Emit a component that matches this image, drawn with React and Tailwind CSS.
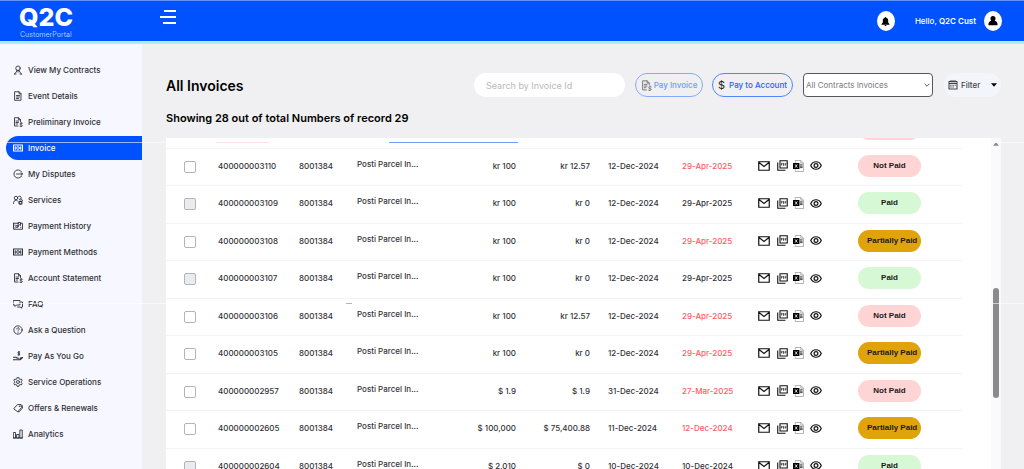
import React, { useState } from "react";

const Icon = ({ children, className = "size-[10px]", box = 20 }) => (
  <svg
    viewBox={`0 0 ${box} ${box}`}
    className={`${className} shrink-0`}
    fill="none"
    stroke="currentColor"
    strokeWidth="1.8"
    strokeLinecap="round"
    strokeLinejoin="round"
    aria-hidden="true"
  >
    {children}
  </svg>
);

const ContractIcon = () => (
  <Icon>
    <circle cx="10" cy="6.5" r="4.5" />
    <path d="M8 10.5 6.5 14 3 18M12 10.5l1.500 3.500L17 18M10 11v3M3 18h3M14 18h3" />
  </Icon>
);

const DocIcon = () => (
  <Icon>
    <path d="M4 1.500h8l4 4v13H4zM12 1.500v4h4M7 9h6M7 12h6M7 15h4" />
  </Icon>
);

const DocDollarIcon = ({ className }) => (
  <Icon className={className}>
    <path d="M10 18H3V1.500h8l4 4V9M11 1.500v4h4M6 8h5M6 11h5M6 14h3" />
    <path d="M18.500 12.500h-3a1.500 1.500 0 0 0 0 3h1.500a1.500 1.500 0 0 1 0 3h-3M16.300 11v1.500M16.300 18.500V20" />
  </Icon>
);

const MoneyIcon = () => (
  <Icon>
    <path d="M1 4h18v12H1z" strokeWidth="2.200" />
    <circle cx="10" cy="10" r="2.800" />
    <path d="M4.500 7.500v5M15.500 7.500v5" strokeWidth="2.200" />
  </Icon>
);

const DisputeIcon = () => (
  <Icon>
    <path d="M17 5.500A8.200 8.200 0 1 0 17 14.500M7 10h12M16 7l3 3-3 3" />
  </Icon>
);

const ServicesIcon = () => (
  <Icon>
    <circle cx="6" cy="6" r="3.500" />
    <path d="M0.800 17c0-4 2-6.500 5.200-6.500 1.500 0 3 .5 4 2M11.500 2.500a3.500 3.500 0 1 1 1.500 6.700M17 8.500c1 .4 2 1.500 2.200 3" />
    <circle cx="15" cy="15.500" r="3" strokeWidth="2.600" />
  </Icon>
);

const HistoryIcon = () => (
  <Icon>
    <path d="M1 4.500h10M1 4.500v12h18v-12h-4M11 3h4v6l-2-1.500L11 9z" />
    <circle cx="8" cy="11" r="2.300" />
    <path d="M4 8v1M4 13v1M15.500 12.500v1" />
  </Icon>
);

const FaqIcon = () => (
  <Icon>
    <path d="M1 3h13v9H7l-3 3v-3H1zM16.500 6H19v10h-2v2.500L14.500 16H9" />
  </Icon>
);

const QuestionIcon = () => (
  <Icon>
    <circle cx="10" cy="10" r="8.300" />
    <path d="M7.500 8a2.500 2.500 0 1 1 3.800 2.100c-.9.6-1.300 1-1.300 1.900M10 14.600v.2" />
  </Icon>
);

const HandIcon = () => (
  <Icon>
    <path d="M13.500 2h-2.300a1.400 1.400 0 0 0 0 2.800h1a1.400 1.400 0 0 1 0 2.800H9.800M11.800.8V9" />
    <path d="M1 12.500h5l3 2h3M1 17.500h13l5-4.500-4 1" strokeWidth="2.400" />
  </Icon>
);

const GearIcon = () => (
  <Icon>
    <path d="m8.300 1.300-.5 2.500-2 1.200-2.500-.9-1.700 3 1.900 1.700v2.400l-1.900 1.700 1.700 3 2.500-.9 2 1.200.5 2.500h3.400l.5-2.500 2-1.200 2.500.9 1.700-3-1.900-1.700V8.800l1.900-1.700-1.700-3-2.500.9-2-1.200-.5-2.500z" />
    <circle cx="10" cy="10" r="3" />
  </Icon>
);

const TagIcon = () => (
  <Icon>
    <path d="m2 11 7-8h7l1 6-7 8zM10 17.500h2.500L19 10l-.800-5.500" />
    <circle cx="13" cy="6.500" r=".6" />
  </Icon>
);

const ChartIcon = () => (
  <Icon>
    <path d="M1.500 7h3.500v11H1.500zM8 11h4v7H8zM14.500 2h4v16h-4zM1 18h18" />
  </Icon>
);

const menu = [
  { name: "View My Contracts", icon: ContractIcon },
  { name: "Event Details", icon: DocIcon },
  { name: "Preliminary Invoice", icon: DocDollarIcon },
  { name: "Invoice", icon: MoneyIcon, active: true },
  { name: "My Disputes", icon: DisputeIcon },
  { name: "Services", icon: ServicesIcon },
  { name: "Payment History", icon: HistoryIcon },
  { name: "Payment Methods", icon: MoneyIcon },
  { name: "Account Statement", icon: DocDollarIcon },
  { name: "FAQ", icon: FaqIcon },
  { name: "Ask a Question", icon: QuestionIcon },
  { name: "Pay As You Go", icon: HandIcon },
  { name: "Service Operations", icon: GearIcon },
  { name: "Offers & Renewals", icon: TagIcon },
  { name: "Analytics", icon: ChartIcon },
];

const invoices = [
  { id: "400000003110", amount: "kr 100", balance: "kr 12.57", date: "12-Dec-2024", due: "29-Apr-2025", status: "Not Paid" },
  { id: "400000003109", amount: "kr 100", balance: "kr 0", date: "12-Dec-2024", due: "29-Apr-2025", status: "Paid" },
  { id: "400000003108", amount: "kr 100", balance: "kr 0", date: "12-Dec-2024", due: "29-Apr-2025", status: "Partially Paid" },
  { id: "400000003107", amount: "kr 100", balance: "kr 0", date: "12-Dec-2024", due: "29-Apr-2025", status: "Paid" },
  { id: "400000003106", amount: "kr 100", balance: "kr 12.57", date: "12-Dec-2024", due: "29-Apr-2025", status: "Not Paid" },
  { id: "400000003105", amount: "kr 100", balance: "kr 0", date: "12-Dec-2024", due: "29-Apr-2025", status: "Partially Paid" },
  { id: "400000002957", amount: "$ 1.9", balance: "$ 1.9", date: "31-Dec-2024", due: "27-Mar-2025", status: "Not Paid" },
  { id: "400000002605", amount: "$ 100,000", balance: "$ 75,400.88", date: "11-Dec-2024", due: "12-Dec-2024", status: "Partially Paid" },
  { id: "400000002604", amount: "$ 2,010", balance: "$ 0", date: "10-Dec-2024", due: "10-Dec-2024", status: "Paid" },
];

const statusColors = {
  "Not Paid": "bg-[#ffd4d4]",
  Paid: "bg-[#d6f8d4]",
  "Partially Paid": "bg-[#e0a30a]",
};

const Header = () => (
  <header className="flex h-11 shrink-0 items-start border-t border-t-[#5f96f5] border-b-[3px] border-b-[#a2f3f3] bg-[#0052ff] text-white">
    <div className="w-[140px] pl-[19px] pt-1">
      <div className="text-[25px] font-extrabold leading-6">Q2C</div>
      <div className="pl-px text-[7px] leading-3 text-[#a9c8ff]">CustomerPortal</div>
    </div>
    <button type="button" className="ml-5 mt-[9px] flex w-4 flex-col items-end gap-1" aria-label="Toggle menu">
      <span className="h-[2px] w-3 bg-white"></span>
      <span className="h-[2px] w-4 bg-white"></span>
      <span className="h-[2px] w-[13px] bg-white"></span>
    </button>
    <div className="ml-auto flex h-10 items-center pr-[22px]">
      <button type="button" className="flex h-5 w-[18px] items-center justify-center rounded-[50%] bg-white text-black" aria-label="Notifications">
        <svg viewBox="0 0 20 20" className="size-[9px]" fill="currentColor">
          <path d="M10 0c1 0 1.600.8 1.600 1.800C14.500 2.600 16 5 16 8v4l3 4v1H1v-1l3-4V8c0-3 1.500-5.400 4.400-6.200C8.400.8 9 0 10 0zM7.500 18h5c-.3 1.300-1.300 2-2.500 2s-2.200-.7-2.500-2z" />
        </svg>
      </button>
      <span className="ml-5 text-[8px] font-medium">
        Hello, <span className="font-semibold">Q2C Cust</span>
      </span>
      <button type="button" className="ml-2 flex h-5 w-[18px] items-center justify-center rounded-[50%] bg-white text-black" aria-label="Profile">
        <svg viewBox="0 0 20 20" className="size-[10px]" fill="currentColor">
          <path d="M10 0c3.300 0 5 2.200 5 5 0 1.800-.5 3.300-1.500 4.300C17 10 19 12.500 19 16v2.500H1V16c0-3.500 2-6 5.500-6.700C5.500 8.300 5 6.800 5 5c0-2.800 1.700-5 5-5z" />
        </svg>
      </button>
    </div>
  </header>
);

const Sidebar = () => (
  <nav className="flex w-[142px] shrink-0 flex-col gap-[2px] bg-[#f7f7ff] pt-[14px]">
    {menu.map(({ name, icon: MenuIcon, active }) => (
      <a
        key={name}
        href="#"
        className={`ml-[6px] flex h-6 shrink-0 items-center gap-[5px] pl-[7px] text-[8px] font-medium ${
          active ? "rounded-l-full bg-[#0052ff] text-white" : "text-[#2f2f35]"
        }`}
      >
        <MenuIcon />
        {name}
      </a>
    ))}
  </nav>
);

const Toolbar = () => {
  const [search, setSearch] = useState("");

  return (
    <div className="flex items-center">
      <h1 className="mr-auto text-[14px] font-semibold text-black">All Invoices</h1>
      <input
        type="text"
        value={search}
        onChange={(e) => setSearch(e.target.value)}
        placeholder="Search by Invoice Id"
        aria-label="Search by Invoice Id"
        className="h-6 w-[151px] rounded-full bg-white px-3 text-[9px] placeholder:text-[#b9b9bd]"
      />
      <button type="button" className="ml-[10px] flex h-6 w-[68px] items-center justify-center gap-[2px] rounded-full border border-[#84abfa] text-[8px] font-medium text-[#6f9cf8]">
        <DocDollarIcon className="size-[11px] text-[#77777c]" />
        Pay Invoice
      </button>
      <button type="button" className="ml-[9px] flex h-6 w-[81px] items-center justify-center gap-1 rounded-full border border-[#4f86fa] text-[8px] font-medium text-[#1f63fb]">
        <span className="text-[11px] font-normal text-[#222]">$</span>
        Pay to Account
      </button>
      <div className="relative ml-[10px] w-[130px]">
        <select aria-label="Contracts" className="block h-6 w-full appearance-none rounded-[4px] border border-[#55555a] bg-white pl-[2px] text-[8px] text-[#7a7a80]">
          <option>All Contracts Invoices</option>
        </select>
        <svg viewBox="0 0 10 10" className="pointer-events-none absolute right-[3px] top-[9px] size-[6px]" fill="none" stroke="#55555a" strokeWidth="1.600">
          <path d="m1 3 4 4 4-4" />
        </svg>
      </div>
      <button type="button" className="ml-[11px] flex h-6 w-[57px] items-center rounded-full bg-[#f4f4fb] pl-1 text-[8px] font-medium text-[#44444a]">
        <Icon>
          <path d="M2 3h16v15H2zM2 7h16M6 1v3M10 1v3M14 1v3" strokeWidth="2.200" />
          <path d="M5 10.500h10M5 14h7" strokeDasharray="1.500 3" />
        </Icon>
        <span className="ml-[3px]">Filter</span>
        <svg viewBox="0 0 10 6" className="ml-auto mr-1 h-1 w-[6px]" fill="#000">
          <path d="M0 0h10L5 6z" />
        </svg>
      </button>
    </div>
  );
};

const RowActions = () => (
  <div className="flex items-center gap-[5px] text-[#111]">
    <button type="button" aria-label="Email invoice">
      <svg viewBox="0 0 24 20" className="h-[10px] w-3" fill="none" stroke="currentColor" strokeWidth="2.400">
        <path d="M1.500 1.500h21v17h-21zM2 3l10 8 10-8" />
      </svg>
    </button>
    <button type="button" aria-label="Download PDF" className="ml-[2px]">
      <svg viewBox="0 0 22 22" className="size-[11px]" fill="none" stroke="currentColor" strokeWidth="2.200">
        <path d="M6 1.500h14.500V16H6zM1.500 5v15.500H17" />
        <path d="M9 11V6.500h1.500v2.200H9M13 6.500V11h1V6.500zM17 11V6.500h2M17 8.700h1.500" strokeWidth="1.200" />
      </svg>
    </button>
    <button type="button" aria-label="Download Excel">
      <svg viewBox="0 0 24 26" className="h-3 w-[11px]" fill="none">
        <path d="M5 6V1h12l6 6v18H5v-5" stroke="#8a8a8a" strokeWidth="1.400" />
        <path d="M17 1v6h6" stroke="#8a8a8a" strokeWidth="1.400" />
        <path d="M0 6.500h14v13H0z" fill="#000" />
        <path d="m4.500 9.500 5 7M9.500 9.500l-5 7" stroke="#fff" strokeWidth="1.800" />
        <path d="M15 10.500h6M15 13.500h6M15 16.500h6" stroke="#222" strokeWidth="1.800" />
      </svg>
    </button>
    <button type="button" aria-label="View invoice" className="ml-px">
      <svg viewBox="0 0 24 18" className="h-[9px] w-3" fill="none" stroke="currentColor" strokeWidth="2.400">
        <path d="M1.500 9C3.500 4.500 7.300 1.500 12 1.500S20.500 4.500 22.500 9c-2 4.500-5.800 7.500-10.500 7.500S3.500 13.500 1.500 9z" />
        <circle cx="12" cy="9" r="3.800" />
      </svg>
    </button>
  </div>
);

const InvoiceTable = () => (
  <div className="flex min-h-0 flex-1 overflow-hidden bg-white">
    <div className="min-w-0 flex-1 pr-[29px]">
      <table className="w-full table-fixed text-left text-[8px] font-medium text-[#333338]">
        <colgroup>
          <col className="w-[52px]" />
          <col className="w-[81px]" />
          <col className="w-[58px]" />
          <col className="w-[76px]" />
          <col className="w-[83px]" />
          <col className="w-[74px]" />
          <col className="w-[92px]" />
          <col className="w-[76px]" />
          <col className="w-[100px]" />
          <col className="w-[104px]" />
        </colgroup>
        <thead>
          {/* tail of the row scrolled under the top edge */}
          <tr className="border-b border-[#f4f4f6]">
            <td colSpan="9" className="h-[10px]"></td>
            <td>
              <div className="h-[9px] overflow-hidden">
                <div className="-mt-5 h-[22px] w-[63px] rounded-full bg-[#ffd4d4]"></div>
              </div>
            </td>
          </tr>
        </thead>
        <tbody>
          {invoices.map((inv) => {
            const paid = inv.status === "Paid";
            return (
              <tr key={inv.id} className="border-b border-[#f4f4f6] odd:h-[37px] even:h-[38px]">
                <td className="pl-[18px]">
                  <input
                    type="checkbox"
                    disabled={paid}
                    aria-label={`Select invoice ${inv.id}`}
                    className="block size-3 appearance-none rounded-[2px] border border-[#b4b4b8] bg-white disabled:bg-[#e9ecef]"
                  />
                </td>
                <td className="pb-[2px]">{inv.id}</td>
                <td className="pb-[2px]">8001384</td>
                <td className="pb-[6px]">Posti Parcel In...</td>
                <td className="pb-[2px] text-right">{inv.amount}</td>
                <td className="pb-[2px] text-right">{inv.balance}</td>
                <td className="pb-[2px] pl-[18px]">{inv.date}</td>
                <td className={paid ? "pb-[2px]" : "pb-[2px] text-[#ff5a5f]"}>{inv.due}</td>
                <td className="pb-[2px]">
                  <RowActions />
                </td>
                <td className="pb-[2px]">
                  <div
                    className={`h-[22px] w-[63px] whitespace-nowrap rounded-full px-[9px] text-center font-['Liberation_Sans',sans-serif] text-[8px] font-bold leading-[22px] text-[#1a1a1a] ${statusColors[inv.status]}`}
                  >
                    {inv.status}
                  </div>
                </td>
              </tr>
            );
          })}
        </tbody>
      </table>
    </div>
    <div className="flex w-[10px] flex-col items-center bg-[#fafafa] pt-1">
      <svg viewBox="0 0 10 6" className="h-1 w-[6px] shrink-0" fill="#8a8a8a">
        <path d="M5 0l5 6H0z" />
      </svg>
      <div className="mt-[142px] h-[110px] w-[6px] shrink-0 rounded-full bg-[#8b8b8b]"></div>
    </div>
  </div>
);

const App = () => {
  return (
    <div className="relative flex h-screen flex-col overflow-hidden bg-[#f0f0f2] font-['Inter',sans-serif]">
      <Header />
      <div className="flex min-h-0 flex-1">
        <Sidebar />
        <main className="flex min-w-0 flex-1 flex-col pl-6 pr-[23px] pt-[29px]">
          <Toolbar />
          <h2 className="mb-3 mt-[13px] text-[11px] font-semibold leading-4 text-black">
            Showing 28 out of total Numbers of record 29
          </h2>
          <InvoiceTable />
        </main>
      </div>

      {/* hairlines over the page */}
      <div className="pointer-events-none absolute inset-x-0 top-[142px] h-px bg-white/60"></div>
      <div className="pointer-events-none absolute inset-x-0 top-[303px] h-px bg-white/60"></div>
      <div className="pointer-events-none absolute left-[216px] top-[142px] h-px w-[52px] bg-[#ffe0de]"></div>
      <div className="pointer-events-none absolute left-[389px] top-[142px] h-px w-[129px] bg-[#6f9cf8]"></div>
      <div className="pointer-events-none absolute left-[346px] top-[303px] h-px w-[6px] bg-[#b5b5b8]"></div>
    </div>
  );
};

export default App;
